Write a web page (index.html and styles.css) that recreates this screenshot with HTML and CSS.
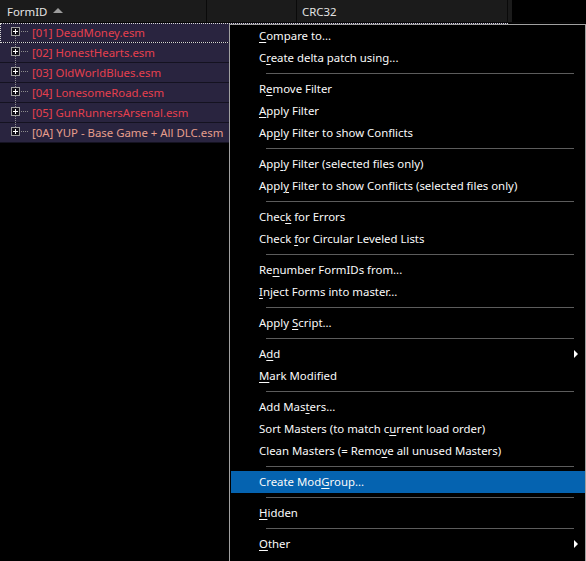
FILE: index.html
```html
<!DOCTYPE html>
<html>
<head>
<meta charset="utf-8">
<title>xEdit</title>
<link rel="stylesheet" href="styles.css">
</head>
<body>
<div class="grid">
  <div class="header">
    <div class="hcell c1"><span>FormID</span><span class="sort"></span></div>
    <div class="hcell c2"></div>
    <div class="hcell c3">CRC32</div>
    <div class="hcell c4"></div>
  </div>
  <div class="tree">
    <div class="row focus">
      <svg class="node" width="21" height="20" viewBox="0 0 21 20"><line class="dot" x1="4.5" y1="14" x2="4.5" y2="20"/><rect class="box" x="0.5" y="5.5" width="8" height="8"/><path class="plus" d="M2 9.5H7M4.5 7V12"/><line class="dot" x1="10" y1="9.5" x2="18" y2="9.5"/></svg>
      <span class="name red">[01] DeadMoney.esm</span>
    </div>
    <div class="row">
      <svg class="node" width="21" height="20" viewBox="0 0 21 20"><line class="dot" x1="4.5" y1="0" x2="4.5" y2="5"/><line class="dot" x1="4.5" y1="14" x2="4.5" y2="20"/><rect class="box" x="0.5" y="5.5" width="8" height="8"/><path class="plus" d="M2 9.5H7M4.5 7V12"/><line class="dot" x1="10" y1="9.5" x2="18" y2="9.5"/></svg>
      <span class="name red">[02] HonestHearts.esm</span>
    </div>
    <div class="row">
      <svg class="node" width="21" height="20" viewBox="0 0 21 20"><line class="dot" x1="4.5" y1="0" x2="4.5" y2="5"/><line class="dot" x1="4.5" y1="14" x2="4.5" y2="20"/><rect class="box" x="0.5" y="5.5" width="8" height="8"/><path class="plus" d="M2 9.5H7M4.5 7V12"/><line class="dot" x1="10" y1="9.5" x2="18" y2="9.5"/></svg>
      <span class="name red">[03] OldWorldBlues.esm</span>
    </div>
    <div class="row">
      <svg class="node" width="21" height="20" viewBox="0 0 21 20"><line class="dot" x1="4.5" y1="0" x2="4.5" y2="5"/><line class="dot" x1="4.5" y1="14" x2="4.5" y2="20"/><rect class="box" x="0.5" y="5.5" width="8" height="8"/><path class="plus" d="M2 9.5H7M4.5 7V12"/><line class="dot" x1="10" y1="9.5" x2="18" y2="9.5"/></svg>
      <span class="name red">[04] LonesomeRoad.esm</span>
    </div>
    <div class="row">
      <svg class="node" width="21" height="20" viewBox="0 0 21 20"><line class="dot" x1="4.5" y1="0" x2="4.5" y2="5"/><line class="dot" x1="4.5" y1="14" x2="4.5" y2="20"/><rect class="box" x="0.5" y="5.5" width="8" height="8"/><path class="plus" d="M2 9.5H7M4.5 7V12"/><line class="dot" x1="10" y1="9.5" x2="18" y2="9.5"/></svg>
      <span class="name red">[05] GunRunnersArsenal.esm</span>
    </div>
    <div class="row">
      <svg class="node" width="21" height="20" viewBox="0 0 21 20"><line class="dot" x1="4.5" y1="0" x2="4.5" y2="5"/><rect class="box" x="0.5" y="5.5" width="8" height="8"/><path class="plus" d="M2 9.5H7M4.5 7V12"/><line class="dot" x1="10" y1="9.5" x2="18" y2="9.5"/></svg>
      <span class="name peach">[0A] YUP - Base Game + All DLC.esm</span>
    </div>
  </div>
</div>

<div class="menu">
  <div class="item"><span><u>C</u>ompare to...</span></div>
  <div class="item"><span>C<u>r</u>eate delta patch using...</span></div>
  <div class="sep"></div>
  <div class="item"><span>R<u>e</u>move Filter</span></div>
  <div class="item"><span><u>A</u>pply Filter</span></div>
  <div class="item"><span>Ap<u>p</u>ly Filter to show Conflicts</span></div>
  <div class="sep"></div>
  <div class="item"><span>App<u>l</u>y Filter (selected files only)</span></div>
  <div class="item"><span>Appl<u>y</u> Filter to show Conflicts (selected files only)</span></div>
  <div class="sep"></div>
  <div class="item"><span>Chec<u>k</u> for Errors</span></div>
  <div class="item"><span>Check <u>f</u>or Circular Leveled Lists</span></div>
  <div class="sep"></div>
  <div class="item"><span>Re<u>n</u>umber FormIDs from...</span></div>
  <div class="item"><span><u>I</u>nject Forms into master...</span></div>
  <div class="sep"></div>
  <div class="item"><span>Apply <u>S</u>cript...</span></div>
  <div class="sep"></div>
  <div class="item"><span>A<u>d</u>d</span><svg class="arrow" width="4" height="8" viewBox="0 0 4 8"><path d="M0 0L4 4L0 8Z"/></svg></div>
  <div class="item"><span><u>M</u>ark Modified</span></div>
  <div class="sep"></div>
  <div class="item"><span>Add Mas<u>t</u>ers...</span></div>
  <div class="item"><span>Sort Masters (to match c<u>u</u>rrent load order)</span></div>
  <div class="item"><span>Clean Masters (= Remo<u>v</u>e all unused Masters)</span></div>
  <div class="sep"></div>
  <div class="item active"><span>Create Mod<u>G</u>roup...</span></div>
  <div class="sep"></div>
  <div class="item"><span><u>H</u>idden</span></div>
  <div class="sep"></div>
  <div class="item"><span><u>O</u>ther</span><svg class="arrow" width="4" height="8" viewBox="0 0 4 8"><path d="M0 0L4 4L0 8Z"/></svg></div>
</div>
</body>
</html>
```

FILE: styles.css
```css
html, body {
  margin: 0;
  height: 100%;
}

body {
  background: #000;
  font-family: "Noto Sans", "Open Sans", sans-serif;
  font-size: 11.4px;
  color: #fff;
  overflow: hidden;
  position: relative;
}

.grid {
  width: 586px;
}

.header {
  display: flex;
  height: 22px;
  border-bottom: 1px solid #060606;
}

.hcell {
  box-sizing: border-box;
  background: #1b1b1b;
  border-right: 1px solid #0a0a0a;
  display: flex;
  align-items: center;
  color: #e4e4e4;
}

.c1 {
  width: 207px;
  padding-left: 7px;
  gap: 6px;
}

.c2 {
  width: 90px;
}

.c3 {
  width: 211px;
  padding-left: 5px;
}

.c4 {
  width: 4px;
  border-right: none;
}

.sort {
  width: 0;
  height: 0;
  border-left: 5px solid transparent;
  border-right: 5px solid transparent;
  border-bottom: 5px solid #9c9c9c;
  margin-top: -1px;
}

.tree {
  width: 508px;
}

.row {
  box-sizing: border-box;
  height: 20px;
  background: #29243f;
  border-bottom: 1px solid #141220;
  display: flex;
  align-items: center;
  padding-left: 11px;
}

.row.focus {
  outline: 1px dotted #d8d8d8;
  outline-offset: -1px;
}

.node {
  display: block;
  flex: none;
  margin-top: -1px;
}

.node .dot {
  stroke: #8c8c8c;
  stroke-width: 1;
  stroke-dasharray: 1 1;
}

.node .box {
  fill: #121018;
  stroke: #a0a0a0;
  stroke-width: 1;
}

.node .plus {
  stroke: #ffffff;
  stroke-width: 1;
  fill: none;
}

.name {
  white-space: nowrap;
}

.red {
  color: #e5404e;
}

.peach {
  color: #e69e8c;
}

.menu {
  position: absolute;
  left: 229px;
  top: 24px;
  width: 357px;
  box-sizing: border-box;
  border: 1px solid #a0a0a0;
  background: #000;
  padding: 0 0 10px 1px;
}

.item {
  height: 22px;
  box-sizing: border-box;
  padding-left: 28px;
  padding-right: 7px;
  padding-bottom: 1px;
  display: flex;
  align-items: center;
  justify-content: space-between;
  color: #fafafa;
  white-space: nowrap;
}

.item.active {
  background: #0563b0;
}

.item u {
  text-decoration-thickness: 1px;
  text-underline-offset: 2px;
}

.arrow {
  display: block;
  fill: #ffffff;
}

.sep {
  height: 1px;
  background: #5c5c5c;
  margin: 4px 11px 4px 35px;
}
```
